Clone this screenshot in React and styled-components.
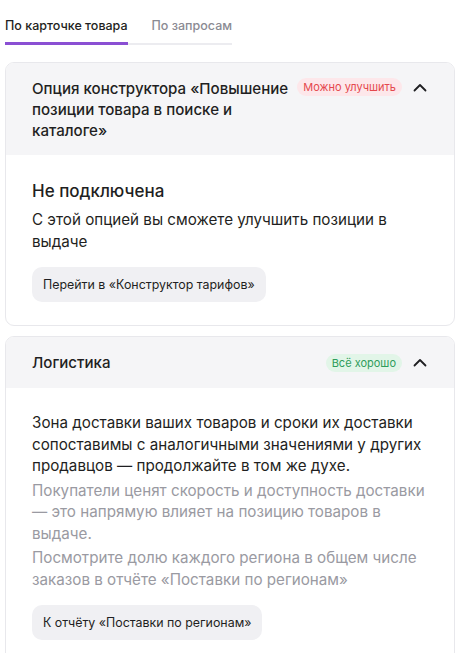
import React from 'react'
import styled, { createGlobalStyle } from 'styled-components'

const Global = createGlobalStyle`
  body {
    margin: 0;
    background: #fff;
    font-family: Inter, "Noto Sans", sans-serif;
    color: #1f1f22;
  }
`

const Page = styled.div`
  width: 450px;
  padding: 18px 0 0 5px;
`

const Tabs = styled.div`
  display: flex;
  gap: 24px;
  border-bottom: 2px solid #ececf0;
  width: fit-content;
  margin-bottom: 17px;
`

const Tab = styled.div`
  font-size: 12.5px;
  font-weight: 500;
  padding-bottom: 9px;
  margin-bottom: -2px;
  color: ${p => (p.$active ? '#1f1f22' : '#8b8b93')};
  border-bottom: 3px solid ${p => (p.$active ? '#8a4fd3' : 'transparent')};
`

const List = styled.div`
  display: flex;
  flex-direction: column;
  gap: 10px;
`

const Card = styled.section`
  border: 1px solid #e8e8ec;
  border-radius: 9px;
  overflow: hidden;
`

const Header = styled.div`
  display: flex;
  align-items: ${p => (p.$multi ? 'flex-start' : 'center')};
  gap: 6px;
  background: #f5f5f7;
  padding: ${p => (p.$multi ? '15px 26px 14px 26px' : '15px 26px 15px 26px')};
`

const Title = styled.h2`
  flex: 1;
  margin: 0;
  font-size: 15.1px;
  line-height: 21px;
  font-weight: 500;
`

const Badge = styled.span`
  flex: none;
  font-size: 11px;
  line-height: 18px;
  padding: 0 6px;
  border-radius: 9px;
  color: ${p => (p.$tone === 'good' ? '#2f9d5b' : '#e5484d')};
  background: ${p => (p.$tone === 'good' ? '#e2f5e8' : '#fde7ea')};
`

const Chevron = styled.svg`
  flex: none;
  width: 16px;
  height: 16px;
  margin-left: 4px;
  margin-top: ${p => (p.$multi ? '2px' : '0')};
`

const Body = styled.div`
  padding: 24px 26px 23px 26px;
  display: flex;
  flex-direction: column;
  align-items: flex-start;
`

const Status = styled.h3`
  margin: 0 0 6px;
  font-size: 17px;
  line-height: 24px;
  font-weight: 500;
`

const Text = styled.p`
  margin: 0 0 3px;
  font-size: 15.2px;
  line-height: 21.5px;
  color: ${p => (p.$muted ? '#9a9aa2' : '#1f1f22')};
`

const Button = styled.button`
  margin-top: 12px;
  border: none;
  background: #f0f0f3;
  border-radius: 10px;
  padding: 0 11px;
  height: 35px;
  font-family: inherit;
  font-size: 12.4px;
  color: #1f1f22;
  cursor: pointer;
`

const Up = ({ multi }) => (
  <Chevron $multi={multi} viewBox="0 0 16 16" fill="none">
    <path d="M2.5 10.5L8 5l5.5 5.5" stroke="#1f1f22" strokeWidth="1.8" strokeLinecap="round" strokeLinejoin="round" />
  </Chevron>
)

const App = () => (
  <Page>
    <Global />
    <Tabs>
      <Tab $active>По карточке товара</Tab>
      <Tab>По запросам</Tab>
    </Tabs>
    <List>
      <Card>
        <Header $multi>
          <Title>Опция конструктора «Повышение позиции товара в поиске и каталоге»</Title>
          <Badge>Можно улучшить</Badge>
          <Up multi />
        </Header>
        <Body>
          <Status>Не подключена</Status>
          <Text>С этой опцией вы сможете улучшить позиции в выдаче</Text>
          <Button>Перейти в «Конструктор тарифов»</Button>
        </Body>
      </Card>
      <Card>
        <Header>
          <Title>Логистика</Title>
          <Badge $tone="good">Всё хорошо</Badge>
          <Up />
        </Header>
        <Body>
          <Text>Зона доставки ваших товаров и сроки их доставки сопоставимы с аналогичными значениями у других продавцов — продолжайте в том же духе.</Text>
          <Text $muted>Покупатели ценят скорость и доступность доставки — это напрямую влияет на позицию товаров в выдаче.</Text>
          <Text $muted>Посмотрите долю каждого региона в общем числе заказов в отчёте «Поставки по регионам»</Text>
          <Button>К отчёту «Поставки по регионам»</Button>
        </Body>
      </Card>
    </List>
  </Page>
)

export default App
